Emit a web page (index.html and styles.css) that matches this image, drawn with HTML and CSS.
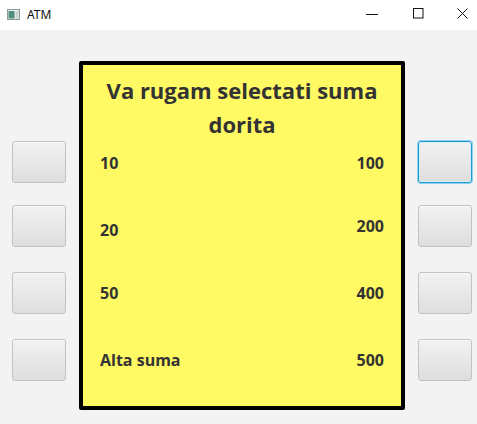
FILE: index.html
```html
<!DOCTYPE html>
<html>
<head>
<meta charset="utf-8">
<link rel="stylesheet" href="styles.css">
</head>
<body>
<div class="window">
  <div class="titlebar">
    <svg class="app-icon" width="13" height="11" viewBox="0 0 13 11">
      <rect x="0.5" y="0.5" width="12" height="10" fill="#e8ecec" stroke="#8a9a9a"/>
      <rect x="1.5" y="2" width="6" height="7.5" fill="#4f8f7c"/>
      <rect x="8.5" y="2" width="3" height="7.5" fill="#c9d4d4"/>
    </svg>
    <span class="title">ATM</span>
    <svg class="controls" width="120" height="30" viewBox="0 0 120 30">
      <line x1="9" y1="14.5" x2="21" y2="14.5" stroke="#111" stroke-width="1"/>
      <rect x="56.5" y="8.5" width="9.5" height="9.5" fill="none" stroke="#111" stroke-width="1"/>
      <path d="M100.5 8.5 L110.5 18.5 M110.5 8.5 L100.5 18.5" stroke="#111" stroke-width="1"/>
    </svg>
  </div>
  <div class="main">
    <div class="btn-col">
      <button class="key"></button>
      <button class="key"></button>
      <button class="key"></button>
      <button class="key"></button>
    </div>
    <div class="screen">
      <div class="heading">Va rugam selectati suma<br>dorita</div>
      <div class="rows">
        <div class="row"><span>10</span><span>100</span></div>
        <div class="row"><span>20</span><span class="raise">200</span></div>
        <div class="row"><span>50</span><span>400</span></div>
        <div class="row"><span>Alta suma</span><span>500</span></div>
      </div>
    </div>
    <div class="btn-col">
      <button class="key focused"></button>
      <button class="key"></button>
      <button class="key"></button>
      <button class="key"></button>
    </div>
  </div>
</div>
</body>
</html>
```
FILE: styles.css
```css
html, body {
  margin: 0;
  padding: 0;
}
body {
  width: 477px;
  height: 424px;
  overflow: hidden;
  background: #f3f3f3;
  font-family: "Open Sans", "Noto Sans", sans-serif;
}
.window {
  width: 477px;
  height: 424px;
  display: flex;
  flex-direction: column;
}
.titlebar {
  height: 30px;
  background: #ffffff;
  display: flex;
  align-items: center;
  flex: none;
}
.app-icon {
  margin-left: 7px;
  margin-top: -1px;
}
.title {
  margin-left: 7px;
  font-family: "Noto Sans", "Open Sans", sans-serif;
  font-size: 12px;
  color: #111;
  margin-top: -2px;
}
.controls {
  margin-left: auto;
  display: block;
}
.main {
  display: flex;
  align-items: flex-start;
  flex: 1;
}
.btn-col {
  display: flex;
  flex-direction: column;
  padding-top: 111px;
  width: 54px;
  margin: 0 13px 0 12px;
}
.btn-col:last-child {
  margin: 0 5px 0 13px;
}
.key {
  width: 54px;
  height: 42px;
  box-sizing: border-box;
  border: 1px solid #c2c2c2;
  border-radius: 3px;
  background: linear-gradient(#f2f2f2, #dedede);
  box-shadow: inset 0 1px 0 #fafafa;
  padding: 0;
  margin: 0;
}
.key:nth-child(2) { margin-top: 22px; }
.key:nth-child(3) { margin-top: 25px; }
.key:nth-child(4) { margin-top: 25px; }
.key.focused {
  border: 1px solid #1b9ad6;
  box-shadow: 0 0 0 1px #8fd0ef, inset 0 0 0 1px #d8eef9;
}
.screen {
  margin-top: 31px;
  width: 326px;
  height: 349px;
  box-sizing: border-box;
  border: 4px solid #000;
  border-radius: 2px;
  background: #fff964;
  padding: 7px 17px 0 17px;
  color: #333333;
  font-weight: bold;
}
.heading {
  font-size: 22px;
  line-height: 34px;
  text-align: center;
  padding-top: 1px;
}
.rows {
  margin-top: 12px;
  font-size: 16px;
  line-height: 20px;
}
.row {
  display: flex;
  justify-content: space-between;
  align-items: flex-start;
  height: 20px;
}
.row:nth-child(2) { margin-top: 47px; }
.row:nth-child(3) { margin-top: 43px; }
.row:nth-child(4) { margin-top: 47px; }
.raise {
  margin-top: -4px;
}
```
